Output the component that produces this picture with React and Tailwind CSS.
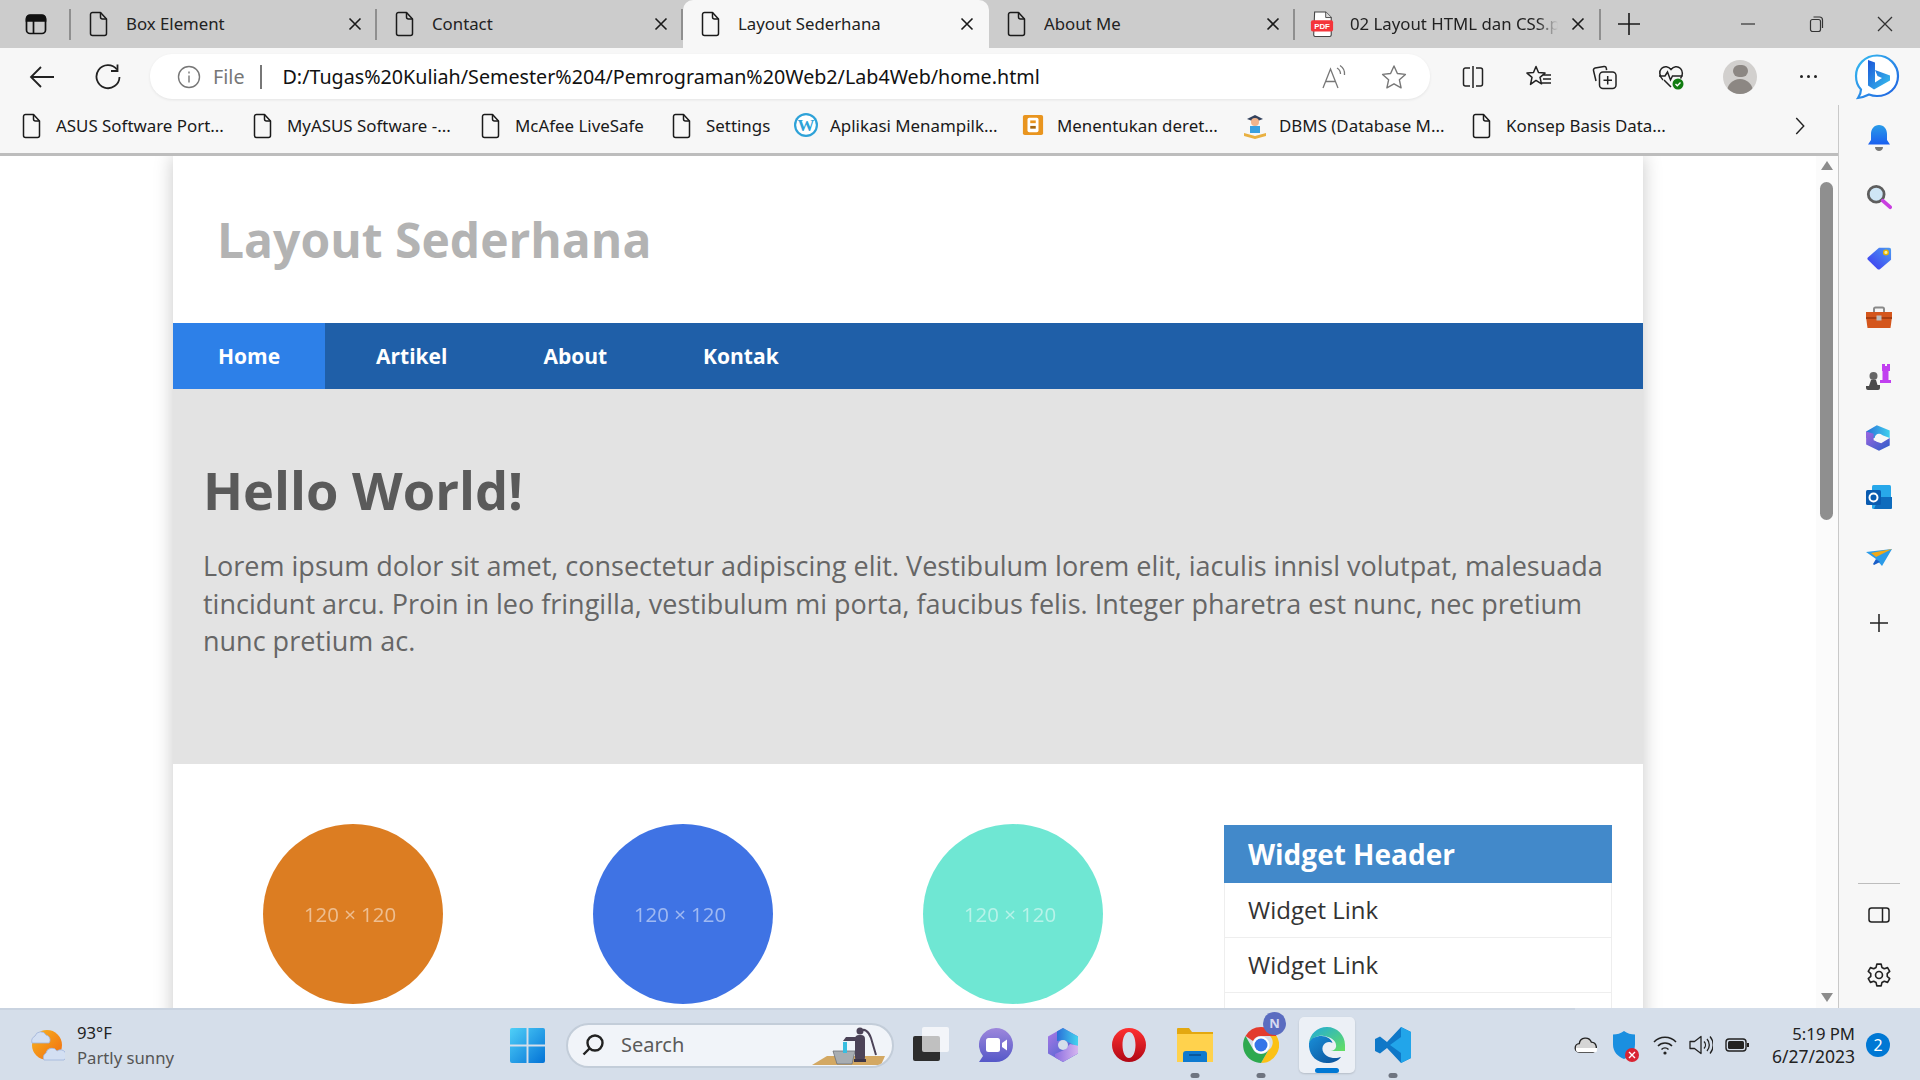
import React from "react";

const ui = { fontFamily: '"Noto Sans", "Open Sans", sans-serif' };

function Doc({ className = "" }) {
  return (
    <svg viewBox="0 0 20 26" className={`w-[20px] h-[26px] shrink-0 ${className}`} fill="none" stroke="#1a1a1a" strokeWidth="1.5" strokeLinejoin="round">
      <path d="M3.5 1.5h8l6 6.5v14.5a2 2 0 0 1-2 2h-12a2 2 0 0 1-2-2v-19a2 2 0 0 1 2-2z" />
      <path d="M11.5 1.5v4.5a2 2 0 0 0 2 2h4" />
    </svg>
  );
}

function CloseX() {
  return (
    <svg viewBox="0 0 14 14" className="w-[14px] h-[14px]" stroke="#1a1a1a" strokeWidth="1.6">
      <path d="M1.5 1.5l11 11M12.5 1.5l-11 11" />
    </svg>
  );
}

function Tab({ title, active, icon, fade }) {
  return (
    <div className={`w-[306px] h-full relative flex items-center shrink-0 ${active ? "bg-[#f7f7f7] rounded-t-[10px]" : "border-r-2 border-[#9c9c9c] border-solid [border-image:linear-gradient(transparent_20%,#8f8f8f_20%,#8f8f8f_82%,transparent_82%)_1]"}`}>
      <div className="w-[55px] pl-[18px] shrink-0">{icon || <Doc />}</div>
      <span className={`text-[16.8px] text-[#222] whitespace-nowrap overflow-hidden ${fade ? "w-[208px] [mask-image:linear-gradient(to_right,black_90%,transparent)]" : "w-[220px]"}`}>{title}</span>
      <div className={`absolute top-[17px] ${fade ? "left-[276px]" : "left-[277px]"}`}><CloseX /></div>
    </div>
  );
}

function PdfIcon() {
  return (
    <svg viewBox="0 0 26 28" className="w-[24px] h-[26px]">
      <path d="M5 1h12l6 6v19a1.5 1.5 0 0 1-1.5 1.5h-16a1.5 1.5 0 0 1-1.5-1.5z" fill="#fff" stroke="#444" strokeWidth="1.2" />
      <path d="M17 1v6h6" fill="#ddd" stroke="#444" strokeWidth="1" />
      <rect x="1" y="10" width="24" height="12" rx="2" fill="#f4343a" />
      <text x="13" y="19.5" textAnchor="middle" fontSize="8.5" fontWeight="700" fill="#fff" fontFamily="Liberation Sans">PDF</text>
    </svg>
  );
}

function TopBar() {
  return (
    <div className="h-[48px] bg-[#cccccc] flex items-stretch shrink-0" style={ui}>
      <div className="w-[71px] shrink-0 flex items-center pl-[24px] border-r-2 border-solid [border-image:linear-gradient(transparent_20%,#8f8f8f_20%,#8f8f8f_82%,transparent_82%)_1]">
        <svg viewBox="0 0 24 24" className="w-[24px] h-[24px]" fill="none" stroke="#111" strokeWidth="1.7">
          <rect x="2.5" y="3" width="19" height="18.5" rx="3.5" />
          <path d="M2.5 7.500a4 4 0 0 1 4-4h11a4 4 0 0 1 4 4v1.500h-19z" fill="#111" />
          <path d="M9.5 9v12" />
        </svg>
      </div>
      <Tab title="Box Element" />
      <Tab title="Contact" />
      <Tab title="Layout Sederhana" active />
      <Tab title="About Me" />
      <Tab title="02 Layout HTML dan CSS.pdf" icon={<div className="-ml-[3px]"><PdfIcon /></div>} fade />
      <div className="ml-[17px] flex items-center">
        <svg viewBox="0 0 22 22" className="w-[22px] h-[22px]" stroke="#1a1a1a" strokeWidth="1.6"><path d="M11 0v22M0 11h22" /></svg>
      </div>
      <div className="ml-auto flex items-center">
        <svg viewBox="0 0 16 16" className="w-[16px] h-[16px] mr-[52px]" stroke="#333" strokeWidth="1.2"><path d="M1 8h14" /></svg>
        <svg viewBox="0 0 16 16" className="w-[16px] h-[16px] mr-[53px]" fill="none" stroke="#333" strokeWidth="1.2"><rect x="2.5" y="3.500" width="10" height="12" rx="2" /><path d="M5.500 1h6a3 3 0 0 1 3 3v8" /></svg>
        <svg viewBox="0 0 16 16" className="w-[16px] h-[16px] mr-[27px]" stroke="#333" strokeWidth="1.3"><path d="M1 1l14 14M15 1L1 15" /></svg>
      </div>
    </div>
  );
}

function AddressBar() {
  return (
    <div className="h-[57px] bg-[#f7f7f7] flex items-center shrink-0 relative" style={ui}>
      <svg viewBox="0 0 26 26" className="w-[26px] h-[26px] ml-[29px]" fill="none" stroke="#222" strokeWidth="1.8"><path d="M25 13H2M12 3L2 13l10 10" /></svg>
      <svg viewBox="0 0 26 26" className="w-[26px] h-[26px] ml-[40px]" fill="none" stroke="#222" strokeWidth="1.8"><path d="M22 5.500A11.500 11.500 0 1 0 24.500 13" /><path d="M22.500 0.500v6.500h-6.500" /></svg>
      <div className="ml-[29px] w-[1280px] h-[45px] rounded-[22px] bg-white flex items-center shadow-[0_1px_3px_rgba(0,0,0,0.08)]">
        <svg viewBox="0 0 24 24" className="w-[24px] h-[24px] ml-[27px]" fill="none" stroke="#777" strokeWidth="1.4"><circle cx="12" cy="12" r="10.5" /><path d="M12 10.500v7M12 6.500v2" /></svg>
        <span className="ml-[12px] text-[19.7px] text-[#777]">File</span>
        <div className="ml-[16px] w-[2px] h-[24px] bg-[#777]" />
        <span className="ml-[20px] text-[19.72px] text-[#111] whitespace-nowrap">D:/Tugas%20Kuliah/Semester%204/Pemrograman%20Web2/Lab4Web/home.html</span>
        <svg viewBox="0 0 26 26" className="w-[26px] h-[26px] ml-auto" fill="none" stroke="#777" strokeWidth="1.3"><path d="M1 24L8.500 5l7.500 19M4 17.500h9" /><path d="M15 4a7 7 0 0 1 3.500 6M18 1.500a10 10 0 0 1 4.500 9.500" /></svg>
        <svg viewBox="0 0 26 26" className="w-[26px] h-[26px] ml-[33px] mr-[23px]" fill="none" stroke="#777" strokeWidth="1.4" strokeLinejoin="round"><path d="M13 2l3.400 7.500 8 .9-6 5.400 1.700 8L13 19.800 5.900 23.800l1.700-8-6-5.400 8-.9z" /></svg>
      </div>
      <svg viewBox="0 0 24 24" className="w-[24px] h-[24px] ml-[31px]" fill="none" stroke="#222" strokeWidth="1.5"><path d="M9 3H4.500a2 2 0 0 0-2 2v14a2 2 0 0 0 2 2H9M15 3h4.500a2 2 0 0 1 2 2v14a2 2 0 0 1-2 2H15M12 1v22" /></svg>
      <svg viewBox="0 0 26 26" className="w-[26px] h-[26px] ml-[41px]" fill="none" stroke="#222" strokeWidth="1.5" strokeLinejoin="round"><path d="M10 2.500l2.500 6 6.500.6-5 4.300 1.500 6.400-5.500-3.400-5.500 4 1.500-7L1 9.100l6.500-.6zM17 11h8M17 15h8M16 19h9" /></svg>
      <svg viewBox="0 0 26 26" className="w-[26px] h-[26px] ml-[40px]" fill="none" stroke="#222" strokeWidth="1.5"><path d="M4 17L1.500 6.500a2 2 0 0 1 1.600-2.400L12 2.500a2 2 0 0 1 2.300 1.600l.3 2" /><rect x="7.5" y="8" width="16.5" height="16.5" rx="3.5" /><path d="M15.700 12v8.500M11.500 16.200H20" /></svg>
      <svg viewBox="0 0 26 26" className="w-[26px] h-[26px] ml-[40px]" fill="none">
        <path d="M5 16C1 12 1 7 3.500 4.500 6.500 1.500 10.500 2.500 13 5.500c2.500-3 6.500-4 9.500-1 2.500 2.500 2.500 7 0 10" stroke="#222" strokeWidth="1.5" />
        <path d="M1 12h6l2.500-4 3 8 2-4h10M6 16l7 7" stroke="#222" strokeWidth="1.5" />
        <circle cx="20" cy="20" r="5.5" fill="#107c10" />
        <path d="M17.500 20l1.800 1.800 3.200-3.300" stroke="#fff" strokeWidth="1.3" />
      </svg>
      <div className="ml-[39px] w-[34px] h-[34px] rounded-full bg-[#d2d0ce] overflow-hidden flex flex-col items-center shrink-0">
        <div className="w-[15px] h-[15px] rounded-full bg-[#8c8783] mt-[5px]" />
        <div className="w-[26px] h-[18px] rounded-t-full bg-[#8c8783] mt-[2px]" />
      </div>
      <div className="ml-[43px] flex gap-[4px]">
        <div className="w-[3px] h-[3px] rounded-full bg-[#222]" />
        <div className="w-[3px] h-[3px] rounded-full bg-[#222]" />
        <div className="w-[3px] h-[3px] rounded-full bg-[#222]" />
      </div>
      <svg viewBox="0 0 46 46" className="w-[46px] h-[46px] ml-[37px] shrink-0">
        <defs>
          <linearGradient id="bingO" x1="0" y1="0" x2="1" y2="1"><stop offset="0" stopColor="#37bdf0" /><stop offset="1" stopColor="#1f5fe0" /></linearGradient>
          <linearGradient id="bingB" x1="0" y1="0" x2="1" y2="1"><stop offset="0" stopColor="#1c55d8" /><stop offset="1" stopColor="#38c3ee" /></linearGradient>
        </defs>
        <path d="M23 1.500C35 1.500 44 11 44 22c0 12-9.500 20-21 20-3 0-5.500-.5-8-1.500-3 1.500-6 3-11 3.500 2-3 3-5.500 3-8.500C3.500 32 2 27 2 22 2 11 11 1.500 23 1.500z" fill="#fff" stroke="url(#bingO)" strokeWidth="2.2" />
        <path d="M14 6l7 2.500v20l7-4.500-4.500-2-2.500-6 15 5.500v5l-16 9-6-4z" fill="url(#bingB)" />
      </svg>
    </div>
  );
}

function Bookmark({ icon, text, width }) {
  return (
    <div className="flex items-center shrink-0" style={{ width }}>
      <div className="w-[24px] flex justify-center shrink-0">{icon || <Doc />}</div>
      <span className="ml-[12px] text-[16.9px] text-[#1a1a1a] whitespace-nowrap">{text}</span>
    </div>
  );
}

function BookmarkBar() {
  return (
    <div className="h-[48px] bg-[#f7f7f7] flex items-center shrink-0 pl-[20px] pb-[7px]" style={ui}>
      <Bookmark text="ASUS Software Port..." width={231} />
      <Bookmark text="MyASUS Software -..." width={228} />
      <Bookmark text="McAfee LiveSafe" width={191} />
      <Bookmark text="Settings" width={124} />
      <Bookmark text="Aplikasi Menampilk..." width={227} icon={
        <svg viewBox="0 0 24 24" className="w-[24px] h-[24px]"><circle cx="12" cy="12" r="12" fill="#2ea2d8" /><circle cx="12" cy="12" r="9.8" fill="#fff" /><text x="12" y="18" textAnchor="middle" fontSize="17" fontWeight="700" fill="#2ea2d8" fontFamily="Liberation Serif">W</text></svg>
      } />
      <Bookmark text="Menentukan deret..." width={222} icon={
        <svg viewBox="0 0 24 24" className="w-[22px] h-[24px]"><rect x="1" y="1" width="22" height="22" rx="2" fill="#e9951f" /><rect x="6" y="4" width="12" height="16" rx="2" fill="#fff" /><rect x="9" y="7" width="6" height="3" fill="#e9951f" /><rect x="9" y="13" width="6" height="3" fill="#a5660f" /></svg>
      } />
      <Bookmark text="DBMS (Database M..." width={227} icon={
        <svg viewBox="0 0 24 28" className="w-[24px] h-[28px]"><path d="M4 7l8-4 8 4-8 3z" fill="#33415c" /><circle cx="12" cy="10" r="4" fill="#f2b48c" /><path d="M7 14h10v7H7z" fill="#3aa0e0" /><path d="M1 21l11 3 11-3v3l-11 3-11-3z" fill="#e9b040" /></svg>
      } />
      <Bookmark text="Konsep Basis Data..." width={325} />
      <svg viewBox="0 0 12 22" className="w-[10px] h-[20px]" fill="none" stroke="#222" strokeWidth="1.7"><path d="M1.500 1.500l9 9.500-9 9.500" /></svg>
    </div>
  );
}

function Circle({ color }) {
  return (
    <div className="w-[330px] flex justify-center shrink-0">
      <div className={`w-[180px] h-[180px] rounded-full flex items-center justify-center ${color}`}>
        <span className="text-[20.4px] text-white/50 -ml-[6px] blur-[0.3px]">120 × 120</span>
      </div>
    </div>
  );
}

function PageContent() {
  return (
    <div className="w-[1470px] mx-auto bg-white shadow-[0_0_18px_rgba(0,0,0,0.22)] min-h-full" style={{ fontFamily: '"Open Sans", sans-serif' }}>
      <div className="h-[167px] flex items-center pl-[44px]">
        <h1 className="text-[48px] font-bold text-[#b3b3b3] leading-none">Layout Sederhana</h1>
      </div>
      <nav className="h-[66px] bg-[#1f5fa8] flex text-[21px] font-bold text-white">
        <a className="w-[152px] bg-[#2d80e8] flex items-center pl-[45px] pt-[1px]">Home</a>
        <a className="ml-[51px] flex items-center pt-[1px]">Artikel</a>
        <a className="ml-[96px] flex items-center pt-[1px]">About</a>
        <a className="ml-[96px] flex items-center pt-[1px]">Kontak</a>
      </nav>
      <section className="h-[375px] bg-[#e3e3e3] pl-[30px] pr-[30px] pt-[65px]">
        <h2 className="text-[52.4px] font-bold text-[#5a5a5a] leading-[72px]">Hello World!</h2>
        <p className="mt-[21px] text-[27px] leading-[37.5px] text-[#666]">Lorem ipsum dolor sit amet, consectetur adipiscing elit. Vestibulum lorem elit, iaculis innisl volutpat, malesuada tincidunt arcu. Proin in leo fringilla, vestibulum mi porta, faucibus felis. Integer pharetra est nunc, nec pretium nunc pretium ac.</p>
      </section>
      <div className="flex pt-[60px] pl-[15px]">
        <Circle color="bg-[#dc7d22]" />
        <Circle color="bg-[#3f73e4]" />
        <Circle color="bg-[#6fe7d3]" />
        <aside className="ml-[46px] w-[388px] shrink-0 mt-[1px]">
          <div className="h-[58px] bg-[#4289ca] flex items-center pl-[24px] text-[28px] font-bold text-white">Widget Header</div>
          <div className="border-x border-[#eeeeee]">
            <div className="h-[55px] pl-[23px] flex items-center text-[24px] text-[#333] border-b border-[#eeeeee]">Widget Link</div>
            <div className="h-[55px] pl-[23px] flex items-center text-[24px] text-[#333] border-b border-[#eeeeee]">Widget Link</div>
            <div className="h-[55px]" />
          </div>
        </aside>
      </div>
    </div>
  );
}

function Scrollbar() {
  return (
    <div className="w-[22px] shrink-0 bg-[#fbfbfb] flex flex-col items-start pl-[4px] relative z-10">
      <div className="mt-[5px] ml-[1px] w-0 h-0 border-x-[6px] border-x-transparent border-b-[9px] border-b-[#8c8c8c]" />
      <div className="mt-[12px] w-[13px] h-[338px] rounded-full bg-[#8f8f8f]" />
      <div className="mt-auto mb-[6px] ml-[1px] w-0 h-0 border-x-[6px] border-x-transparent border-t-[9px] border-t-[#8c8c8c]" />
    </div>
  );
}

function SideIcon({ children }) {
  return <div className="h-[60px] flex items-center justify-center shrink-0">{children}</div>;
}

function Sidebar() {
  return (
    <div className="w-[82px] shrink-0 bg-[#f7f7f7] border-l border-[#c9c9c9] flex flex-col items-center pt-[3px] pr-[1px]">
      <SideIcon>
        <svg viewBox="0 0 24 28" className="w-[24px] h-[28px]"><defs><linearGradient id="bell" x1="0" y1="0" x2="0" y2="1"><stop offset="0" stopColor="#2a9ce8" /><stop offset="1" stopColor="#1a5ff0" /></linearGradient></defs><path d="M12 1c5 0 8 4 8 9v6l3 4.500H1L4 16v-6c0-5 3-9 8-9z" fill="url(#bell)" /><path d="M8 23h8c0 2.500-2 4-4 4s-4-1.500-4-4z" fill="#777" /></svg>
      </SideIcon>
      <SideIcon>
        <svg viewBox="0 0 28 28" className="w-[26px] h-[26px] -mt-[2px]"><circle cx="11" cy="11" r="8.5" fill="#cfe6f5" stroke="#5e5e5e" strokeWidth="3" /><path d="M18 18l8 7" stroke="#c93fe0" strokeWidth="4" strokeLinecap="round" /></svg>
      </SideIcon>
      <SideIcon>
        <svg viewBox="0 0 28 28" className="w-[26px] h-[26px]"><defs><linearGradient id="tag" x1="1" y1="0" x2="0" y2="1"><stop offset="0" stopColor="#4c9bf2" /><stop offset="1" stopColor="#3e35f0" /></linearGradient></defs><path d="M14 3h11a2 2 0 0 1 2 2v11L15 26a2 2 0 0 1-2.500 0L2 16a2 2 0 0 1 0-2.500z" fill="url(#tag)" /><circle cx="21.5" cy="8" r="2.5" fill="#f7f0a0" stroke="#e8b400" strokeWidth="1.5" /></svg>
      </SideIcon>
      <SideIcon>
        <svg viewBox="0 0 28 24" className="w-[28px] h-[24px]"><path d="M9 7V3a1.500 1.500 0 0 1 1.500-1.500h7A1.500 1.500 0 0 1 19 3v4" fill="none" stroke="#8a8a8a" strokeWidth="2" /><path d="M1 6h26v5L25.500 22h-23L1 11z" fill="#d4561c" /><path d="M1 11h26v2H1z" fill="#a83e10" /><rect x="11.5" y="9.5" width="5" height="5" fill="#bdbdbd" /></svg>
      </SideIcon>
      <SideIcon>
        <svg viewBox="0 0 28 28" className="w-[28px] h-[28px] -mt-[2px]"><path d="M17 1h3v2h2V1h3v7h-1.500v9H26v3h-11v-3h2.500V8H17z" fill="#c13ff0" /><circle cx="8.5" cy="13" r="4" fill="#666" /><path d="M6 17h5l1.500 5h2.500v3a2 2 0 0 1-2 2H3a2 2 0 0 1-2-2v-2h3z" fill="#4a4a4a" /></svg>
      </SideIcon>
      <SideIcon>
        <svg viewBox="0 0 28 28" className="w-[30px] h-[30px]"><defs><linearGradient id="m1" x1="0" y1="0" x2="1" y2="1"><stop offset="0" stopColor="#a066e0" /><stop offset="1" stopColor="#2a5cc8" /></linearGradient><linearGradient id="m2" x1="0" y1="0" x2="1" y2="0"><stop offset="0" stopColor="#2a6fd8" /><stop offset="1" stopColor="#3fd0ee" /></linearGradient></defs><path d="M12 2l12 5v7l-8-3-5 3H2V8z" fill="url(#m2)" /><path d="M2 8v12l12 6 10-5v-7l-8 5-7-3V10z" fill="url(#m1)" /><circle cx="14" cy="14" r="4" fill="#f7f7f7" /></svg>
      </SideIcon>
      <SideIcon>
        <svg viewBox="0 0 28 26" className="w-[28px] h-[26px] -mt-[2px]"><rect x="7" y="1" width="19" height="24" rx="1.5" fill="#28a8ea" /><path d="M14 13l13 0v11a1 1 0 0 1-1 1H9z" fill="#0f6cbd" /><rect x="1" y="6" width="15" height="15" rx="1.5" fill="#0a5bb0" /><circle cx="8.5" cy="13.5" r="4" fill="none" stroke="#fff" strokeWidth="2" /></svg>
      </SideIcon>
      <SideIcon>
        <svg viewBox="0 0 28 22" className="w-[28px] h-[22px]"><path d="M1 5l26-3-10 17-6-7z" fill="#2b9be8" /><path d="M27 2L6 6l5 4z" fill="#f0a818" /><path d="M11 12l-3 5 1 1 6-3z" fill="#1a5fc8" /></svg>
      </SideIcon>
      <SideIcon>
        <svg viewBox="0 0 20 20" className="w-[18px] h-[18px] mt-[10px]" stroke="#222" strokeWidth="1.7"><path d="M10 0v20M0 10h20" /></svg>
      </SideIcon>
      <div className="mt-auto w-[42px] h-[1px] bg-[#bdbdbd]" />
      <div className="h-[60px] mt-[1px] flex items-center justify-center">
        <svg viewBox="0 0 22 16" className="w-[22px] h-[16px]" fill="none" stroke="#222" strokeWidth="1.5"><rect x="1" y="1" width="20" height="14" rx="2.5" /><path d="M14.500 1v14" /></svg>
      </div>
      <div className="h-[60px] mb-[3px] flex items-center justify-center">
        <svg viewBox="0 0 24 24" className="w-[26px] h-[26px]" fill="none" stroke="#222" strokeWidth="1.5" strokeLinejoin="round"><circle cx="12" cy="12" r="3.2" /><path d="M10 2h4l.7 3 2.200 1.200 3-1 2 3.500-2.300 2v2.600l2.300 2-2 3.500-3-1-2.200 1.200-.7 3h-4l-.7-3-2.200-1.200-3 1-2-3.500 2.300-2v-2.600l-2.300-2 2-3.500 3 1L9.300 5z" /></svg>
      </div>
    </div>
  );
}

function Dot() {
  return <div className="absolute -bottom-[1px] left-1/2 -translate-x-1/2 w-[9px] h-[5px] rounded-full bg-[#6e7480]" />;
}

function Taskbar() {
  return (
    <div className="h-[72px] shrink-0 bg-[#d5deea] border-t-2 border-solid [border-image:linear-gradient(to_right,#c9d3e0_82%,#d5deea_82%)_1] flex items-center relative z-20" style={ui}>
      <svg viewBox="0 0 36 36" className="w-[36px] h-[36px] ml-[29px] shrink-0">
        <defs><linearGradient id="sun" x1="0" y1="0" x2="1" y2="1"><stop offset="0" stopColor="#f8b520" /><stop offset="1" stopColor="#f06a10" /></linearGradient></defs>
        <circle cx="18" cy="18" r="15" fill="url(#sun)" />
        <path d="M3 16a6 6 0 0 1 3-7 6 6 0 0 1 11-1 5 5 0 0 1 3 8z" fill="#d3dff2" stroke="#9fb4dc" strokeWidth=".8" />
        <path d="M15 33a5 5 0 0 1 2-7 6 6 0 0 1 11-2 5 5 0 0 1 7 9z" fill="#d3dff2" stroke="#9fb4dc" strokeWidth=".8" />
      </svg>
      <div className="ml-[12px] w-[120px] shrink-0 flex flex-col leading-[25px]">
        <span className="text-[16.7px] text-[#222]">93°F</span>
        <span className="text-[16.7px] text-[#555]">Partly sunny</span>
      </div>
      <svg viewBox="0 0 36 36" className="w-[35px] h-[35px] ml-[313px] shrink-0">
        <defs><linearGradient id="win" x1="0" y1="0" x2="1" y2="1"><stop offset="0" stopColor="#4fd0f8" /><stop offset="1" stopColor="#0372d6" /></linearGradient></defs>
        <path d="M2 0h15v17H0V2a2 2 0 0 1 2-2zM19 0h15a2 2 0 0 1 2 2v15H19zM0 19h17v17H2a2 2 0 0 1-2-2zM19 19h17v15a2 2 0 0 1-2 2H19z" fill="url(#win)" />
      </svg>
      <div className="ml-[21px] w-[328px] h-[45px] rounded-full bg-[#f1f4f9] border-2 border-[#c3cdd9] flex items-center shrink-0 overflow-hidden">
        <svg viewBox="0 0 24 24" className="w-[24px] h-[24px] ml-[13px] shrink-0" fill="none" stroke="#222" strokeWidth="2.4"><circle cx="14" cy="10" r="7.5" /><path d="M8.500 15.500L2.500 21.500" /></svg>
        <span className="ml-[16px] text-[20px] text-[#5a5a5a]">Search</span>
        <svg viewBox="0 0 80 42" className="w-[80px] h-[42px] ml-auto shrink-0">
          <path d="M0 41l15-9h58l-4 9z" fill="#d3a863" />
          <path d="M21 27h22l-3 13H25z" fill="#a8adb2" stroke="#6d7278" strokeWidth=".8" />
          <path d="M33 18v11" stroke="#39bde0" strokeWidth="4" />
          <rect x="43" y="11" width="10" height="26" rx="4" fill="#4c4358" />
          <path d="M31 17h13v-4H34z" fill="#4c4358" />
          <path d="M48 8C52 3 57 8 59 14L64 31" fill="none" stroke="#4c4358" strokeWidth="2" />
          <circle cx="48" cy="7" r="3.5" fill="#4c4358" />
          <rect x="42" y="35" width="12" height="3" fill="#3c3548" />
        </svg>
      </div>
      <div className="relative ml-[19px] w-[36px] h-[36px] shrink-0">
        <div className="absolute left-0 top-[9px] w-[27px] h-[25px] rounded-[2px] bg-[#2d2d2d]" />
        <div className="absolute left-[9px] top-0 w-[27px] h-[25px] rounded-[2px] bg-white/70" />
      </div>
      <svg viewBox="0 0 34 34" className="w-[34px] h-[34px] ml-[30px] shrink-0">
        <defs><linearGradient id="meet" x1="0" y1="0" x2="0" y2="1"><stop offset="0" stopColor="#9d87dc" /><stop offset="1" stopColor="#5558c8" /></linearGradient></defs>
        <path d="M17 0a17 17 0 0 1 0 34H0l4-6A17 17 0 0 1 17 0z" fill="url(#meet)" />
        <rect x="7" y="10" width="14" height="14" rx="2.5" fill="#fff" />
        <path d="M23 15l5-3.500v11L23 19z" fill="#fff" />
      </svg>
      <svg viewBox="0 0 32 34" className="w-[32px] h-[34px] ml-[34px] shrink-0">
        <defs>
          <clipPath id="hexa"><path d="M16 0L31 8.500V25.500L16 34L1 25.500V8.500Z" /></clipPath>
          <linearGradient id="tm1" x1="0" y1="0" x2="1" y2="1"><stop offset="0" stopColor="#b27be8" /><stop offset="1" stopColor="#2a5cc8" /></linearGradient>
          <linearGradient id="tm2" x1="0" y1="0" x2="1" y2="0"><stop offset="0" stopColor="#2a6fd8" /><stop offset="1" stopColor="#45d8f0" /></linearGradient>
          <linearGradient id="tm3" x1="0" y1="0" x2="1" y2="0"><stop offset="0" stopColor="#8c6ee0" /><stop offset="1" stopColor="#d8b8f0" /></linearGradient>
        </defs>
        <g clipPath="url(#hexa)">
          <rect x="0" y="0" width="32" height="34" fill="url(#tm1)" />
          <path d="M10 0h22v20l-9-5-7-3-6 1z" fill="url(#tm2)" />
          <path d="M8 26l9-4 6-6 9 2v16H8z" fill="url(#tm3)" />
        </g>
        <circle cx="16" cy="17" r="5" fill="#d5deea" />
      </svg>
      <svg viewBox="0 0 34 34" className="w-[34px] h-[34px] ml-[33px] shrink-0">
        <defs><linearGradient id="op" x1="0" y1="0" x2="0" y2="1"><stop offset="0" stopColor="#ff3030" /><stop offset="1" stopColor="#b00815" /></linearGradient></defs>
        <path fillRule="evenodd" d="M17 0a17 17 0 1 0 0 34 17 17 0 0 0 0-34zM17 4c4 0 6.500 6 6.500 13s-2.500 13-6.500 13-6.500-6-6.500-13S13 4 17 4z" fill="url(#op)" />
      </svg>
      <div className="relative ml-[31px] w-[36px] h-[64px] shrink-0 flex items-center">
        <svg viewBox="0 0 36 34" className="w-[36px] h-[34px]">
          <path d="M0 1a1 1 0 0 1 1-1h11l3 4h21v30H0z" fill="#e3a810" />
          <path d="M0 6h36v28H0z" fill="#ffd24d" />
          <path d="M6 34v-8a3 3 0 0 1 3-3h18a3 3 0 0 1 3 3v8z" fill="#0e7ad0" />
          <path d="M12 27h12" stroke="#0a4e8c" strokeWidth="1.5" />
        </svg>
        <Dot />
      </div>
      <div className="relative ml-[30px] w-[36px] h-[64px] shrink-0 flex items-center">
        <svg viewBox="0 0 36 36" className="w-[36px] h-[36px]">
          <path d="M18 0a18 18 0 0 1 15.600 9H18a9 9 0 0 0-8 5L2.500 9A18 18 0 0 1 18 0z" fill="#e33b2e" />
          <path d="M33.600 9A18 18 0 0 1 18 36l7.600-13A9 9 0 0 0 27 9z" fill="#fbc116" />
          <path d="M2.500 9l8 14a9 9 0 0 0 15 0L18 36A18 18 0 0 1 2.500 9z" fill="#2da94f" />
          <circle cx="18" cy="18" r="8.5" fill="#fff" /><circle cx="18" cy="18" r="6.5" fill="#3574e8" />
        </svg>
        <div className="absolute -top-[1px] left-[20px] w-[23px] h-[23px] rounded-full bg-[#5a6cc0] flex items-center justify-center text-[13px] font-bold text-[#d5daf0]">N</div>
        <Dot />
      </div>
      <div className="relative ml-[20px] w-[56px] h-[56px] rounded-[5px] bg-[#ecf0f6] shadow-[0_1px_2px_rgba(0,0,0,0.15)] flex items-center justify-center shrink-0">
        <svg viewBox="0 0 36 36" className="w-[36px] h-[36px]">
          <defs>
            <linearGradient id="e1" x1="0" y1="0" x2="1" y2="1"><stop offset="0" stopColor="#1fa8dc" /><stop offset="1" stopColor="#66e060" /></linearGradient>
            <linearGradient id="e2" x1="0" y1="0" x2="1" y2="1"><stop offset="0" stopColor="#1a8fd8" /><stop offset="1" stopColor="#0a4f98" /></linearGradient>
          </defs>
          <path d="M18 0C8 0 1 7 0 16c4-6 10-8 15-7 7 1 13 5 12 11-.5 2.500-3 4-6 4h15c.5-2 0-5 0-6C36 8 28 0 18 0z" fill="url(#e1)" />
          <path d="M0 16c-1 11 7 20 18 20 6 0 11-2 14-6-3 1-9 2-14-1-4-2.500-6-7-3.500-11 2-3 6-4 9-2-1-4-6-7-11-7C7 9 2 11 0 16z" fill="url(#e2)" />
        </svg>
        <div className="absolute bottom-0 left-1/2 -translate-x-1/2 w-[24px] h-[5px] rounded-full bg-[#0078d4]" />
      </div>
      <div className="relative ml-[20px] w-[36px] h-[64px] shrink-0 flex items-center">
        <svg viewBox="0 0 36 36" className="w-[36px] h-[36px]">
          <path d="M26 0l10 5v26l-10 5-14-15-7 5.500-5-2.500V12l5-2.500L12 15z" fill="#0f78c8" />
          <path d="M26 0l10 5v26l-10 5zM26 10L15 18l11 8z" fill="#22a5ea" fillRule="evenodd" />
        </svg>
        <Dot />
      </div>
      <svg viewBox="0 0 26 18" className="w-[25px] h-[18px] ml-[163px] shrink-0"><path d="M6 16.500a4.500 4.500 0 0 1-.5-9 6.500 6.500 0 0 1 12.500-1.500 5.500 5.500 0 0 1 2 10.500z" fill="#d5d5d5" stroke="#222" strokeWidth="1.4" /><path d="M2 12h22v2.500a2 2 0 0 1-2 2H5a3 3 0 0 1-3-3z" fill="#fff" /></svg>
      <div className="relative ml-[13px] w-[24px] h-[28px] shrink-0">
        <svg viewBox="0 0 24 28" className="w-[24px] h-[28px]"><path d="M12 0c3 2.500 7 3.500 11 3.500v10C23 21 18 25.500 12 28 6 25.500 1 21 1 13.500v-10C5 3.500 9 2.500 12 0z" fill="#1a8fe0" /></svg>
        <div className="absolute -right-[3px] -bottom-[3px] w-[14px] h-[14px] rounded-full bg-[#d92432] flex items-center justify-center">
          <svg viewBox="0 0 8 8" className="w-[8px] h-[8px]" stroke="#fff" strokeWidth="1.4"><path d="M1 1l6 6M7 1L1 7" /></svg>
        </div>
      </div>
      <svg viewBox="0 0 24 20" className="w-[24px] h-[20px] ml-[17px] shrink-0" fill="none" stroke="#222" strokeWidth="1.5"><path d="M1 7a15 15 0 0 1 22 0M5 11a9.500 9.500 0 0 1 14 0M8.500 14.500a5 5 0 0 1 7 0" /><circle cx="12" cy="18" r="1.6" fill="#222" stroke="none" /></svg>
      <svg viewBox="0 0 24 22" className="w-[24px] h-[22px] ml-[12px] shrink-0" fill="none" stroke="#222" strokeWidth="1.3" strokeLinejoin="round"><path d="M1 7.500h4.500L12 2.500v17l-6.500-5H1z" /><path d="M15 7.500a5 5 0 0 1 0 7M18 5a9 9 0 0 1 0 12M21 2.500a13 13 0 0 1 0 17" /></svg>
      <svg viewBox="0 0 24 14" className="w-[24px] h-[14px] ml-[12px] shrink-0"><rect x="1" y="1" width="20" height="12" rx="3" fill="none" stroke="#222" strokeWidth="1.4" /><rect x="3" y="3" width="16" height="8" rx="1.5" fill="#222" /><rect x="22" y="5" width="2" height="4" fill="#222" /></svg>
      <div className="ml-auto flex flex-col items-end leading-[23px] text-[#222] shrink-0">
        <span className="text-[16.7px]">5:19 PM</span>
        <span className="text-[17.5px]">6/27/2023</span>
      </div>
      <div className="ml-[11px] mr-[30px] w-[24px] h-[24px] rounded-full bg-[#0078d4] text-white text-[16px] flex items-center justify-center shrink-0">2</div>
    </div>
  );
}

export default function App() {
  return (
    <div className="w-[1920px] h-[1080px] overflow-hidden flex flex-col bg-white">
      <TopBar />
      <AddressBar />
      <div className="flex-1 min-h-0 flex">
        <div className="w-[1838px] flex flex-col min-h-0">
          <BookmarkBar />
          <div className="h-[3px] bg-[#bdbdbd] shrink-0" />
          <div className="flex-1 min-h-0 flex">
            <div className="flex-1 min-w-0 overflow-hidden">
              <PageContent />
            </div>
            <Scrollbar />
          </div>
        </div>
        <Sidebar />
      </div>
      <Taskbar />
    </div>
  );
}
